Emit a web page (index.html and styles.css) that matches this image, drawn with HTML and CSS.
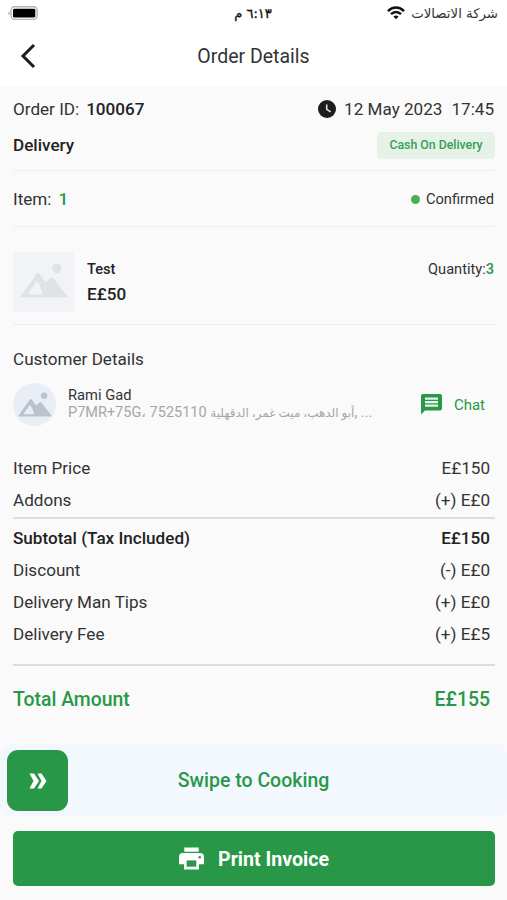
FILE: index.html
```html
<!DOCTYPE html>
<html lang="en">
<head>
<meta charset="utf-8">
<title>Order Details</title>
<link rel="stylesheet" href="styles.css">
</head>
<body>
<div class="status">
  <svg class="battery" width="30" height="14" viewBox="0 0 30 14"><rect x="3" y=".8" width="26.2" height="12.6" rx="3.6" fill="#fff" stroke="#b4b4b4" stroke-width="1.4"/><rect x="5" y="2.8" width="22.3" height="8.8" rx="1.4" fill="#000"/><path d="M1.6 5.2v4Q.2 8.600.2 7.200Q.2 5.800 1.600 5.200Z" fill="#b4b4b4"/></svg>
  <div class="time" dir="rtl" lang="ar">٦:١٣ م</div>
  <div class="carrier">
    <svg width="18" height="14" viewBox="0 0 18 14" fill="none" stroke="#111" stroke-width="2.5"><path d="M1 5.100Q4.400 1.500 9 1.500T17 5.100"/><path d="M4 8.100Q6.200 5.900 9 5.900T14 8.100"/><path d="M9 13.200 6.400 10.500Q9 8.600 11.600 10.500Z" fill="#111" stroke="none"/></svg>
    <span dir="rtl" lang="ar">شركة الاتصالات</span>
  </div>
</div>
<header class="appbar">
  <svg width="16" height="26" viewBox="0 0 16 26" fill="none" stroke="#1c1c1c" stroke-width="3"><path d="M14 2 3 13l11 11"/></svg>
  <h1>Order Details</h1>
</header>
<main>
  <section class="summary">
    <div class="row">
      <div>Order ID:<b class="order-no">100067</b></div>
      <div class="date"><svg width="18" height="18" viewBox="0 0 18 18"><circle cx="9" cy="9" r="9" fill="#1c1c1c"/><path d="M8.700 4.400v5l4 2.400" fill="none" stroke="#e6e6e6" stroke-width="1.500"/></svg><span class="day">12 May 2023</span><span>17:45</span></div>
    </div>
    <div class="row type"><b>Delivery</b><span class="tag">Cash On Delivery</span></div>
  </section>
  <section class="row state">
    <div>Item:<b class="count">1</b></div>
    <div class="confirmed"><i></i>Confirmed</div>
  </section>
  <section class="product">
    <div class="thumb"><svg width="48" height="36" viewBox="0 0 48 36"><use href="#mountains"/></svg></div>
    <div class="info"><div class="name">Test</div><div class="price">E£50</div></div>
    <div class="qty">Quantity:<b>3</b></div>
  </section>
  <h2>Customer Details</h2>
  <section class="customer">
    <div class="avatar"><svg width="34" height="25.500" viewBox="0 0 48 36"><g id="mountains"><path fill-rule="evenodd" d="M1.500 34.500Q0 34.500 1 32.700L16.500 11Q18 9 19.500 11L25.500 19.200 30 15.300Q32 13.800 33.500 15.600L47 32.700Q48 34.500 46.500 34.500ZM7.500 31.500H23L20 22.500 16.500 18.500Z"/><circle cx="36.800" cy="5.400" r="4.600"/></g></svg></div>
    <div class="person"><div class="who">Rami Gad</div><div class="address"><span>P7MR+75G، </span><span class="arabic">أبو الدهب، ميت غمر، الدقهلية</span> <span>7525110</span><span>, ...</span></div></div>
    <div class="chat"><svg width="21" height="21" viewBox="0 0 21 21"><path d="M2 0h17a2 2 0 0 1 2 2v12.500a2 2 0 0 1-2 2H4L0 20.500V2a2 2 0 0 1 2-2Z" fill="#289848"/><path d="M4 4.600h13M4 8.100h13M4 11.600h13" stroke="#e9f4ec" stroke-width="2.300"/></svg><span>Chat</span></div>
  </section>
  <section class="bill">
    <div class="row"><span>Item Price</span><span>E£150</span></div>
    <div class="row"><span>Addons</span><span>(+) E£0</span></div>
    <div class="row strong"><span>Subtotal (Tax Included)</span><span>E£150</span></div>
    <div class="row"><span>Discount</span><span>(-) E£0</span></div>
    <div class="row"><span>Delivery Man Tips</span><span>(+) E£0</span></div>
    <div class="row"><span>Delivery Fee</span><span>(+) E£5</span></div>
  </section>
  <div class="row total"><span>Total Amount</span><span>E£155</span></div>
</main>
<div class="swipe">
  <div class="knob"><svg width="18" height="16" viewBox="0 0 18 16" fill="#fff"><path d="M.5.500H5L10 8 5 15.500H.5L4.500 8ZM8.500.500H12.500L17.500 8 12.500 15.500H8.500L12.500 8Z"/></svg></div>
  <span>Swipe to Cooking</span>
</div>
<button class="print"><svg width="25" height="23" viewBox="0 0 26 23"><path fill="#fff" d="M5.500 0h15v4.500h-15ZM4 5.800h18a4 4 0 0 1 4 4V17.500h-5.200V23H5.200V17.500H0V9.800a4 4 0 0 1 4-4Z"/><path fill="#289848" d="M8 13.500h10v6.500H8Z"/><circle cx="21.500" cy="10.300" r="1.300" fill="#289848"/></svg><span>Print Invoice</span></button>
</body>
</html>
```
FILE: styles.css
```css
* { box-sizing: border-box; }
body { margin: 0; height: 900px; background: #fafafa; color: #333; font: 400 17.1px/20px Roboto, "DejaVu Sans", sans-serif; overflow: hidden; }
svg { display: block; flex: none; }
b { font-weight: 500; }
.status { height: 28px; background: #fff; display: grid; grid-template-columns: 1fr auto 1fr; align-items: center; padding: 0 9px 2px 8px; color: #111; }
.time { padding-top: 1px; font: 500 13px/20px "DejaVu Sans", sans-serif; -webkit-text-stroke: .35px #111; }
.carrier { display: flex; justify-content: flex-end; align-items: center; gap: 6px; font: 13.3px/20px "DejaVu Sans", sans-serif; color: #333; }
.carrier span { padding-top: 1px; }
.appbar { height: 58px; background: #fff; display: grid; grid-template-columns: 16px 1fr 16px; align-items: center; padding: 0 20px 2px; }
h1 { margin: 0; padding-top: 2px; font-size: 19.5px; line-height: 24px; font-weight: 400; text-align: center; }
main { padding: 0 12px 0 13px; }
.row { display: flex; justify-content: space-between; align-items: center; }
.summary { height: 85px; padding-top: 12px; border-bottom: 1px solid #eee; }
.summary .row:first-child { height: 22px; padding-right: 1px; }
.order-no { margin-left: 7px; color: #222; }
.date { display: flex; align-items: center; gap: 8px; }
.day { margin-right: 1px; }
.type { height: 28px; margin-top: 11px; color: #222; }
.tag { width: 118px; height: 27px; border-radius: 5px; background: #e6f1e8; color: #34a056; font-size: 12.3px; line-height: 27px; font-weight: 500; text-align: center; }
.state { height: 56px; padding: 1px 1px 0 0; border-bottom: 1px solid #eee; }
.count { margin-left: 7px; color: #289848; }
.confirmed { display: flex; align-items: center; gap: 6px; font-size: 14.700px; }
.confirmed i { width: 9px; height: 9px; border-radius: 50%; background: #4caf50; }
.product { height: 98px; display: flex; padding: 25px 1px 0 0; border-bottom: 1px solid #eee; }
.thumb { width: 61px; height: 60px; border-radius: 4px; background: #f1f3f6; fill: #dfe2e7; padding: 11px 0 0 7px; }
.info { margin-left: 13px; flex: 1; color: #222; font-weight: 500; }
.name { font-size: 14.6px; line-height: 20px; margin-top: 7px; }
.price { line-height: 20px; margin-top: 5px; }
.qty { margin-top: 7px; font-size: 14.6px; }
.qty b { color: #289848; }
h2 { margin: 24px 0 0; font-size: 17.1px; line-height: 20px; font-weight: 400; }
.customer { display: flex; align-items: center; height: 43px; margin-top: 14px; }
.avatar { width: 43px; height: 43px; border-radius: 50%; background: #e8edf6; fill: #bbc2ce; padding: 9px 0 0 5px; }
.person { margin: -2px 0 0 12px; flex: 1; white-space: nowrap; }
.who { font-size: 14.7px; line-height: 18px; }
.address { font-size: 14.5px; line-height: 18px; height: 18px; color: #a6a6a6; }
.arabic { font-size: 12px; }
.chat { display: flex; align-items: center; gap: 12px; margin-right: 10px; color: #289848; font-size: 15px; }
.bill { margin-top: 26px; padding-bottom: 14px; border-bottom: 2px solid #ddd; }
.bill .row { height: 32px; padding-right: 5px; }
.bill .strong { height: 37px; margin-top: 1px; padding-top: 2px; border-top: 2px solid #ddd; font-weight: 500; color: #222; }
.total { height: 66px; padding: 2px 5px 0 0; color: #289848; font-size: 19.4px; font-weight: 500; }
.swipe { height: 73px; margin-top: 12px; border-radius: 10px; background: #f3f7fe; display: grid; grid-template-columns: 61px 1fr 61px; align-items: center; padding: 0 7px; text-align: center; color: #289848; font-size: 19.5px; font-weight: 500; }
.knob { height: 61px; border-radius: 11px; background: #289848; display: flex; align-items: center; justify-content: center; }
.print { display: flex; align-items: center; justify-content: center; gap: 14px; width: 482px; height: 55px; margin: 14px 0 0 13px; padding: 0; border: 0; border-radius: 5px; background: #289848; color: #fff; font: 700 19.6px/22px Roboto, sans-serif; }
.print span { padding-top: 2px; }
```
